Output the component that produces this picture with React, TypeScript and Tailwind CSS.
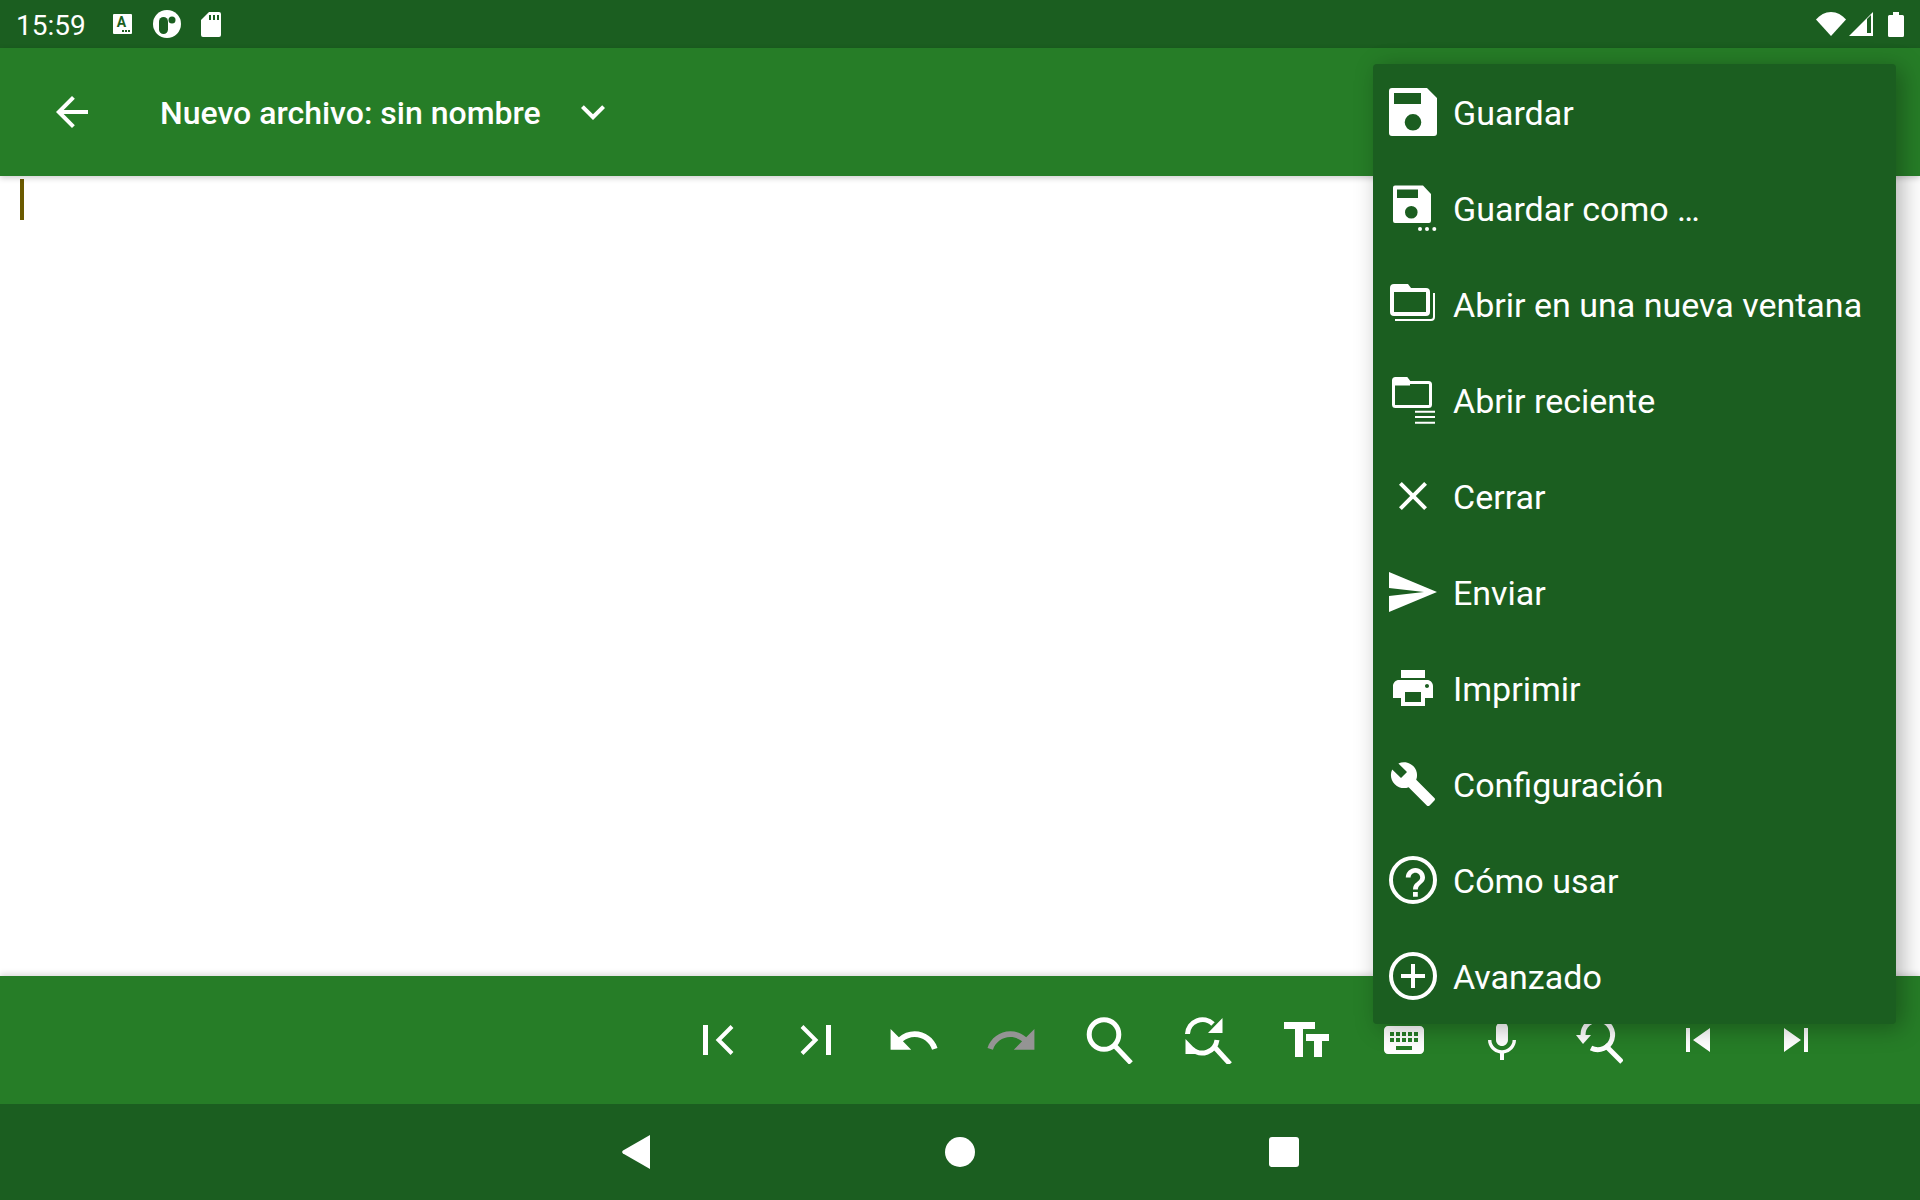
import type { ReactNode } from 'react'

const Icon = ({ children, size = 48, box = '0 0 48 48', className = '' }: { children: ReactNode; size?: number; box?: string; className?: string }) => (
  <svg width={size} height={size} viewBox={box} fill="currentColor" className={`shrink-0 ${className}`}>
    {children}
  </svg>
)

const menuItems: { label: string; icon: ReactNode }[] = [
  {
    label: 'Guardar',
    icon: (
      <Icon>
        <path
          fillRule="evenodd"
          d="M3 0H38L48 10V45a3 3 0 0 1-3 3H3a3 3 0 0 1-3-3V3a3 3 0 0 1 3-3zM5 5V16H32V5zM24 26a8.3 8.3 0 1 0 0 16.6a8.3 8.3 0 1 0 0-16.6z"
        />
      </Icon>
    ),
  },
  {
    label: 'Guardar como …',
    icon: (
      <Icon>
        <path
          fillRule="evenodd"
          d="M6 1.5H34L42 10V37a2 2 0 0 1-2 2H6a2 2 0 0 1-2-2V3.5a2 2 0 0 1 2-2zM8 5.5V14H29V5.5zM22.3 22a6.3 6.3 0 1 0 0 12.6a6.3 6.3 0 1 0 0-12.6z"
        />
        <circle cx="31" cy="45" r="2" />
        <circle cx="38" cy="45" r="2" />
        <circle cx="45.3" cy="45" r="2" />
      </Icon>
    ),
  },
  {
    label: 'Abrir en una nueva ventana',
    icon: (
      <Icon>
        <path d="M3 6h15l3 4v2H3z" />
        <path d="M5 6h13l3 4h16a2 2 0 0 1 2 2v20a2 2 0 0 1-2 2H5a2 2 0 0 1-2-2V8a2 2 0 0 1 2-2z" fill="none" stroke="currentColor" strokeWidth="4" />
        <path d="M6 40h36a3 3 0 0 0 3-3V13" fill="none" stroke="currentColor" strokeWidth="2" />
      </Icon>
    ),
  },
  {
    label: 'Abrir reciente',
    icon: (
      <Icon>
        <path d="M5 2.5h13l3 4v3H5z" />
        <path d="M6.5 2.5h11l3 4h19a2 2 0 0 1 2 2v20a2 2 0 0 1-2 2h-33a2 2 0 0 1-2-2v-24a2 2 0 0 1 2-2z" fill="none" stroke="currentColor" strokeWidth="3" />
        <path d="M26 35.7h20M26 41h20M26 46.7h20" fill="none" stroke="currentColor" strokeWidth="2" />
      </Icon>
    ),
  },
  {
    label: 'Cerrar',
    icon: (
      <Icon box="0 0 24 24">
        <path d="M19 6.41L17.59 5 12 10.59 6.41 5 5 6.41 10.59 12 5 17.59 6.41 19 12 13.41 17.59 19 19 17.59 13.41 12z" />
      </Icon>
    ),
  },
  {
    label: 'Enviar',
    icon: (
      <Icon>
        <path d="M0 4L48 24L0 44V28L35 24L0 20z" />
      </Icon>
    ),
  },
  {
    label: 'Imprimir',
    icon: (
      <Icon box="0 0 24 24">
        <path d="M19 8H5c-1.66 0-3 1.34-3 3v6h4v4h12v-4h4v-6c0-1.66-1.34-3-3-3zm-3 11H8v-5h8v5zm3-7c-.55 0-1-.45-1-1s.45-1 1-1 1 .45 1 1-.45 1-1 1zm-1-9H6v4h12V3z" />
      </Icon>
    ),
  },
  {
    label: 'Configuración',
    icon: (
      <Icon box="0 0 24 24">
        <path d="M22.7 19l-9.1-9.1c.9-2.3.4-5-1.5-6.9-2-2-5-2.4-7.4-1.3L9 6 6 9 1.6 4.7C.4 7.1.9 10.1 2.9 12.1c1.9 1.9 4.6 2.4 6.9 1.5l9.1 9.1c.4.4 1 .4 1.4 0l2.3-2.3c.5-.4.5-1.1.1-1.4z" />
      </Icon>
    ),
  },
  {
    label: 'Cómo usar',
    icon: (
      <Icon>
        <circle cx="24" cy="24" r="22" fill="none" stroke="currentColor" strokeWidth="4" />
        <path
          transform="translate(-2.4 -2.4) scale(1.2)"
          d="M22 36h4v-4h-4v4zM24 12c-4.42 0-8 3.58-8 8h4c0-2.2 1.8-4 4-4s4 1.8 4 4c0 4-6 3.5-6 10h4c0-4.5 6-5 6-10 0-4.42-3.58-8-8-8z"
        />
      </Icon>
    ),
  },
  {
    label: 'Avanzado',
    icon: (
      <Icon>
        <circle cx="24" cy="24" r="22" fill="none" stroke="currentColor" strokeWidth="4" />
        <path d="M22 12h4v10h10v4H26v10h-4V26H12v-4h10z" />
      </Icon>
    ),
  },
]

const toolbarIcons: ReactNode[] = [
  <Icon>
    <path d="M9 9h5v30H9z" />
    <path d="M38 10.5L24.5 24L38 37.5" fill="none" stroke="currentColor" strokeWidth="4" />
  </Icon>,
  <Icon>
    <path d="M34 9h5v30h-5z" />
    <path d="M10 10.5L23.5 24L10 37.5" fill="none" stroke="currentColor" strokeWidth="4" />
  </Icon>,
  <Icon size={55} box="0 0 24 24" className="-translate-x-px">
    <path d="M12.5 8c-2.65 0-5.05.99-6.9 2.6L2 7v9h9l-3.62-3.62c1.39-1.16 3.16-1.88 5.12-1.88 3.54 0 6.55 2.31 7.6 5.5l2.37-.78C21.08 11.03 17.15 8 12.5 8z" />
  </Icon>,
  <Icon size={55} box="0 0 24 24" className="-translate-x-px -scale-x-100 text-[#949494]">
    <path d="M12.5 8c-2.65 0-5.05.99-6.9 2.6L2 7v9h9l-3.62-3.62c1.39-1.16 3.16-1.88 5.12-1.88 3.54 0 6.55 2.31 7.6 5.5l2.37-.78C21.08 11.03 17.15 8 12.5 8z" />
  </Icon>,
  <Icon>
    <circle cx="18" cy="18.5" r="14.8" fill="none" stroke="currentColor" strokeWidth="5" />
    <path d="M28.5 29.5L45 47" fill="none" stroke="currentColor" strokeWidth="5" />
  </Icon>,
  <Icon>
    <path d="M3.5 18A15 15 0 0 1 29 8M33 24A15 15 0 0 1 8 33" fill="none" stroke="currentColor" strokeWidth="5" />
    <path d="M38.5 2V17H24zM1.5 23V38H16z" />
    <path d="M30.5 31L46 48" fill="none" stroke="currentColor" strokeWidth="5" />
  </Icon>,
  <Icon>
    <path d="M2 6H33V13H21V41H13V13H2zM24 18H47V25H40V41H32V25H24z" />
  </Icon>,
  <Icon box="0 0 24 24">
    <path d="M20 5H4c-1.1 0-1.99.9-1.99 2L2 17c0 1.1.9 2 2 2h16c1.1 0 2-.9 2-2V7c0-1.1-.9-2-2-2zm-9 3h2v2h-2V8zm0 3h2v2h-2v-2zM8 8h2v2H8V8zm0 3h2v2H8v-2zm-1 2H5v-2h2v2zm0-3H5V8h2v2zm9 7H8v-2h8v2zm0-4h-2v-2h2v2zm0-3h-2V8h2v2zm3 3h-2v-2h2v2zm0-3h-2V8h2v2z" />
  </Icon>,
  <Icon box="0 0 24 24" className="translate-y-0.5">
    <path d="M12 14c1.66 0 2.99-1.34 2.99-3L15 5c0-1.66-1.34-3-3-3S9 3.34 9 5v6c0 1.66 1.34 3 3 3zm5.3-3c0 3-2.54 5.1-5.3 5.1S6.7 14 6.7 11H5c0 3.41 2.72 6.23 6 6.72V21h2v-3.28c3.28-.48 6-3.3 6-6.72h-1.7z" />
  </Icon>,
  <Icon className="-translate-x-px">
    <path d="M8 19A14.8 14.8 0 1 1 16 32" fill="none" stroke="currentColor" strokeWidth="5" />
    <path d="M1 19H16L8 28z" />
    <path d="M30 29L47 46" fill="none" stroke="currentColor" strokeWidth="5" />
  </Icon>,
  <Icon box="0 0 24 24">
    <path d="M6 6h2v12H6zm3.5 6l8.5 6V6z" />
  </Icon>,
  <Icon box="0 0 24 24">
    <path d="M6 18l8.5-6L6 6v12zM16 6v12h2V6h-2z" />
  </Icon>,
]

export default function App() {
  return (
    <div className="relative flex h-[1200px] w-[1920px] flex-col overflow-hidden bg-white font-['Roboto',sans-serif] text-white">
      {/* status bar */}
      <div className="flex h-12 shrink-0 items-center bg-[#1b5e20] pl-4 pr-4">
        <span className="mt-[3px] text-[28px] leading-none">15:59</span>
        <svg width="19" height="20" viewBox="0 0 19 20" className="ml-[27px]">
          <rect width="19" height="20" rx="1" fill="white" />
          <text x="8.5" y="13" textAnchor="middle" fontSize="14" fontWeight="700" fontFamily="Roboto, sans-serif" fill="#1b5e20">A</text>
          <path d="M9 16h2v2H9zM12 16h2v2h-2zM15 16h2v2h-2z" fill="#1b5e20" />
        </svg>
        <svg width="28" height="28" viewBox="0 0 28 28" className="ml-[21px]">
          <circle cx="14" cy="14" r="14" fill="white" />
          <rect x="6" y="7" width="9" height="17" rx="4.5" fill="#1b5e20" />
          <circle cx="19" cy="10" r="3.5" fill="#1b5e20" />
        </svg>
        <svg width="20" height="25" viewBox="0 0 20 25" className="ml-5">
          <path fillRule="evenodd" d="M8 0H18a2 2 0 0 1 2 2V23a2 2 0 0 1-2 2H2a2 2 0 0 1-2-2V8zM8 3V8H10V3zM12 3V8H14V3zM16 3V8H18V3z" fill="white" />
        </svg>
        <div className="flex-1" />
        <svg width="30" height="24" viewBox="0 0 30 24">
          <path d="M15 24L0 7.5C4 3 9 0 15 0s11 3 15 7.5z" fill="white" />
        </svg>
        <svg width="24" height="24" viewBox="0 0 24 24" className="ml-[3px]">
          <path fillRule="evenodd" d="M0 24L24 0V24zM18 7L18 21H22V3z" fill="white" />
        </svg>
        <svg width="16" height="25" viewBox="0 0 16 25" className="ml-[15px]">
          <path d="M5 0H11V3H14.5A1.5 1.5 0 0 1 16 4.5V23.5A1.5 1.5 0 0 1 14.5 25H1.5A1.5 1.5 0 0 1 0 23.5V4.5A1.5 1.5 0 0 1 1.5 3H5z" fill="white" />
        </svg>
      </div>

      {/* title bar */}
      <div className="relative z-10 flex h-32 shrink-0 items-center bg-[#267d27] pl-12 shadow-[0_2px_6px_rgba(0,0,0,0.2)]">
        <Icon box="0 0 24 24">
          <path d="M20 11H7.83l5.59-5.59L12 4l-8 8 8 8 1.41-1.41L7.83 13H20v-2z" />
        </Icon>
        <span className="ml-[64px] mt-0.5 text-[32px] font-medium leading-none">Nuevo archivo: sin nombre</span>
        <Icon box="0 0 24 24" className="ml-7">
          <path d="M16.59 8.59L12 13.17 7.41 8.59 6 10l6 6 6-6z" />
        </Icon>
      </div>

      {/* editor */}
      <div className="flex-1 pl-5 pt-[3px]">
        <div className="h-[41px] w-1 bg-[#6b5a00]" />
      </div>

      {/* bottom toolbar */}
      <div className="relative z-10 flex h-32 shrink-0 items-center justify-end bg-[#267d27] pr-[75px] shadow-[0_-2px_6px_rgba(0,0,0,0.15)]">
        {toolbarIcons.map((icon, i) => (
          <div key={i} className="flex h-32 w-[98px] items-center justify-center">
            {icon}
          </div>
        ))}
      </div>

      {/* nav bar */}
      <div className="relative z-10 flex h-24 shrink-0 items-center justify-center bg-[#1b5e20]">
        <div className="flex w-[618px] justify-center">
          <svg width="28" height="34" viewBox="0 0 28 34">
            <path d="M28 0V34L1 18.5a2 2 0 0 1 0-3z" fill="white" />
          </svg>
        </div>
        <div className="h-[30px] w-[30px] rounded-full bg-white" />
        <div className="flex w-[618px] justify-center">
          <div className="h-[30px] w-[30px] rounded-[3px] bg-white" />
        </div>
      </div>

      {/* overflow menu */}
      <div className="absolute left-[1373px] top-16 z-20 w-[523px] rounded-[4px] bg-[#1b5e20] shadow-[6px_4px_24px_rgba(0,0,0,0.3)]">
        {menuItems.map((item) => (
          <div key={item.label} className="flex h-24 items-center gap-4 pl-4">
            {item.icon}
            <span className="mt-0.5 text-[34px] leading-none">{item.label}</span>
          </div>
        ))}
      </div>
    </div>
  )
}
